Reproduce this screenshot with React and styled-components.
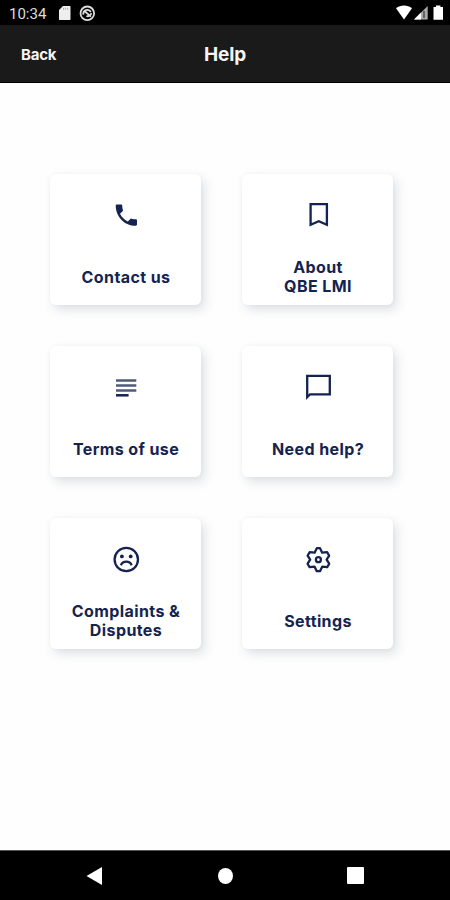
import React from 'react';
import styled, { createGlobalStyle } from 'styled-components';

const NAVY = '#14234f';

const ContactIcon = () => (
  <g transform="translate(2.2 2) scale(1.18)">
    <path fill={NAVY} d="M6.62 10.79c1.44 2.83 3.76 5.14 6.59 6.59l2.2-2.2c.27-.27.67-.36 1.02-.24 1.12.37 2.33.57 3.57.57.55 0 1 .45 1 1V20c0 .55-.45 1-1 1-9.39 0-17-7.61-17-17 0-.55.45-1 1-1h3.5c.55 0 1 .45 1 1 0 1.25.2 2.45.57 3.57.11.35.03.74-.25 1.02l-2.2 2.2z" />
  </g>
);

const BookmarkIcon = () => (
  <path d="M8.6 5.2h16.3v20.5l-8.15-3.5-8.15 3.5z" />
);

const TermsIcon = () => (
  <>
    <path strokeWidth="2.5" opacity="0.75" d="M6 9.4h20.3M6 14.5h20.3M6 19.4h20.3" />
    <path strokeWidth="2.5" d="M6 24.3h12.6" />
  </>
);

const ChatIcon = () => (
  <path d="M5.2 4.9h22.6v18.4H8.1l-2.9 2.9z" />
);

const SadIcon = () => (
  <>
    <circle cx="16.3" cy="16.5" r="11.7" />
    <path d="M10.9 22.2c2.1-4.7 8.7-4.7 10.8 0" />
    <circle cx="11.9" cy="13.4" r="1.9" fill={NAVY} stroke="none" />
    <circle cx="20.7" cy="13.4" r="1.9" fill={NAVY} stroke="none" />
  </>
);

const SettingsIcon = () => (
  <>
    <path
      strokeLinejoin="round"
      d="M14.8 5.2h3.2l2.2 4.5 5-.5 2 3.5-2.6 4 2.6 4-2 3.5-5-.5-2.2 4.5h-3.2l-2.2-4.5-5 .5-2-3.5 2.6-4-2.6-4 2-3.5 5 .5z"
    />
    <circle cx="16.4" cy="16.7" r="2.5" />
  </>
);

const items = [
  { label: ['Contact us'], icon: ContactIcon },
  { label: ['About', 'QBE LMI'], icon: BookmarkIcon },
  { label: ['Terms of use'], icon: TermsIcon },
  { label: ['Need help?'], icon: ChatIcon },
  { label: ['Complaints &', 'Disputes'], icon: SadIcon },
  { label: ['Settings'], icon: SettingsIcon },
];

function StatusBar() {
  return (
    <Status>
      <Clock>10:34</Clock>
      <svg width="92" height="25" viewBox="0 0 92 25">
        <path fill="#eee" d="M17 6h6.5c.6 0 1 .4 1 1v12c0 .6-.4 1-1 1H14c-.6 0-1-.4-1-1v-9z" />
        <path stroke="#999" strokeWidth="0.8" d="M17.5 7.8v2M19.6 7.8v2M21.7 7.8v2" />
        <g fill="none" stroke="#ddd" strokeWidth="1.8">
          <circle cx="41.3" cy="13.3" r="6.8" />
          <path d="M37.3 14.6a4.1 4.1 0 0 1 7.6-2.6M38.4 11l6.6 5.6M45.3 13.2c-.3 2-2.6 3.6-4.9 2.8" />
        </g>
      </svg>
      <Signals width="50" height="25" viewBox="0 0 50 25">
        <path fill="#fff" d="M0 8.2C4.7 4.6 11.3 4.6 16 8.2L8 19.4z" />
        <path fill="#aaa" d="M18 19.5 31.7 6v13.5z" />
        <path fill="#fff" d="M18 19.5 25 12.6v6.9z" />
        <path stroke="#333" strokeWidth="1.2" fill="none" d="M28 11v7" />
        <path fill="#fff" d="M40 5.5h4.4V7H47v12.7h-9.5V7H40z" />
      </Signals>
    </Status>
  );
}

function App() {
  return (
    <Screen>
      <GlobalStyle />
      <StatusBar />
      <Header>
        <BackButton>Back</BackButton>
        <Title>Help</Title>
      </Header>
      <Content>
        {items.map(({ label, icon: Icon }) => (
          <Card key={label[0]}>
            <CardIcon viewBox="0 0 32 32">
              <Icon />
            </CardIcon>
            <Label $single={label.length === 1}>
              {label.map((line) => (
                <span key={line}>{line}</span>
              ))}
            </Label>
          </Card>
        ))}
      </Content>
      <NavBar>
        <svg width="18" height="20" viewBox="0 0 18 20">
          <path fill="#fff" d="M.5 10 16 1v18z" />
        </svg>
        <HomeKey />
        <RecentKey />
      </NavBar>
    </Screen>
  );
}

export default App;

const GlobalStyle = createGlobalStyle`
  body {
    margin: 0;
    background: #fff;
  }
  * {
    box-sizing: border-box;
  }
`;

const Screen = styled.div`
  width: 450px;
  height: 900px;
  display: flex;
  flex-direction: column;
  overflow: hidden;
  background: #fefefe;
  font-family: Inter, 'Liberation Sans', sans-serif;
`;

const Status = styled.div`
  height: 25px;
  flex: none;
  display: flex;
  align-items: center;
  padding-left: 9px;
  background: #000;
`;

const Clock = styled.span`
  width: 37px;
  flex: none;
  padding-top: 2px;
  font-family: Roboto, sans-serif;
  font-size: 15px;
  line-height: 20px;
  color: #ddd;
`;

const Signals = styled.svg`
  margin-left: auto;
  margin-right: 4px;
`;

const Header = styled.header`
  height: 58px;
  flex: none;
  display: grid;
  grid-template-columns: 1fr auto 1fr;
  align-items: center;
  padding: 2px 21px 0;
  background: #1a1a1a;
  border-bottom: 1px solid #000;
  color: #f5f5f5;
`;

const BackButton = styled.button`
  justify-self: start;
  padding: 0;
  border: 0;
  background: none;
  color: inherit;
  font: 700 15px/20px Inter, sans-serif;
  letter-spacing: -0.2px;
`;

const Title = styled.h1`
  margin: 0;
  font-size: 19px;
  line-height: 24px;
  font-weight: 700;
  letter-spacing: -0.2px;
`;

const Content = styled.main`
  flex: 1;
  display: grid;
  grid-template-columns: 151px 151px;
  grid-auto-rows: 131px;
  gap: 41px;
  align-content: start;
  padding: 91px 0 0 50px;
`;

const Card = styled.div`
  display: flex;
  flex-direction: column;
  align-items: center;
  padding-top: 25px;
  border-radius: 6px;
  background: #fff;
  box-shadow: 4px 5px 11px rgba(40, 65, 90, 0.15), 0 0 5px rgba(40, 65, 90, 0.04);
`;

const CardIcon = styled.svg`
  width: 32px;
  height: 32px;
  flex: none;
  fill: none;
  stroke: ${NAVY};
  stroke-width: 2.3;

  g {
    stroke: none;
  }
`;

const Label = styled.div`
  height: 40px;
  margin-top: ${(props) => (props.$single ? '27px' : '26px')};
  padding-left: 1px;
  display: flex;
  flex-direction: column;
  align-items: center;
  justify-content: center;
  font-size: 16px;
  line-height: 19.5px;
  font-weight: 650;
  letter-spacing: 0.4px;
  white-space: nowrap;
  color: ${NAVY};
`;

const NavBar = styled.nav`
  height: 50px;
  flex: none;
  display: flex;
  align-items: center;
  justify-content: space-between;
  padding: 0 86px;
  background: #000;
  border-top: 1px solid #555;
`;

const HomeKey = styled.span`
  width: 15px;
  height: 16px;
  border-radius: 50%;
  background: #fff;
`;

const RecentKey = styled.span`
  width: 17px;
  height: 17px;
  border-radius: 1px;
  background: #fff;
`;
